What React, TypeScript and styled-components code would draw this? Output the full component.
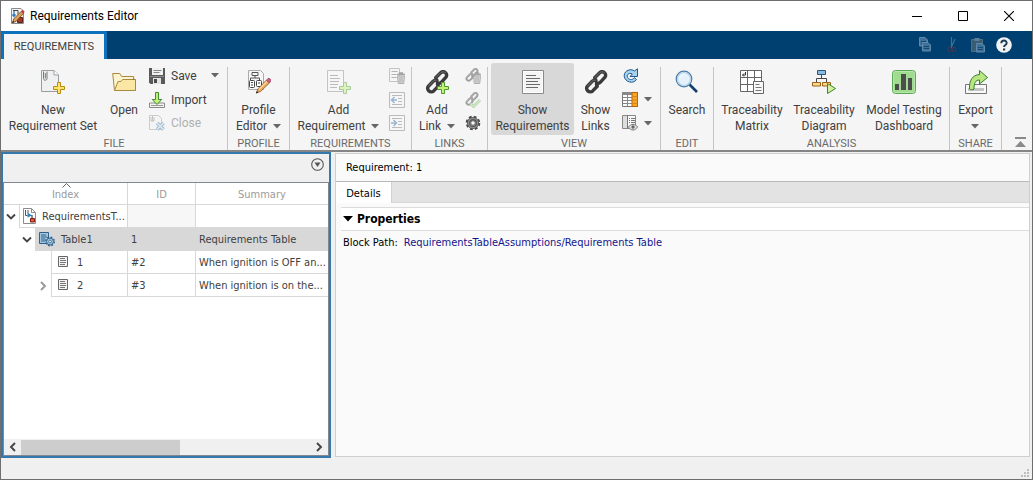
import React from "react";
import styled, { createGlobalStyle, css } from "styled-components";

const UI = `Roboto, "Liberation Sans", sans-serif`;
const TREE = `"DejaVu Sans Condensed", "DejaVu Sans", sans-serif`;

const Global = createGlobalStyle`
  *, *::before, *::after { box-sizing: border-box; }
  body { margin: 0; font-family: ${UI}; font-size: 12px; color: #404040; }
  button { font: inherit; color: inherit; border: 0; padding: 0; background: none; }
  svg { display: block; flex: none; }
`;

/* ---------- window frame ---------- */

const Frame = styled.div`
  display: flex;
  flex-direction: column;
  min-height: 100vh;
  border: 1px solid #6e6e6e;
  background: #f0f0f0;
`;

const TitleBar = styled.header`
  display: flex;
  align-items: center;
  height: 30px;
  padding-left: 8px;
  background: #fff;
`;

const Title = styled.h1`
  flex: 1;
  margin: 0 0 0 5px;
  font-size: 12px;
  font-weight: 400;
  color: #000;
`;

const WindowButton = styled.button`
  display: flex;
  align-items: center;
  justify-content: center;
  width: 46px;
  height: 28px;
`;

const TabStrip = styled.nav`
  display: flex;
  justify-content: space-between;
  align-items: center;
  height: 28px;
  background: #004070;
`;

const RibbonTab = styled.button`
  align-self: stretch;
  width: 106px;
  border: 3px solid #0d72bd;
  border-bottom: 0;
  border-radius: 2px 2px 0 0;
  background: #f5f5f5;
  font-size: 11px;
`;

const QuickAccess = styled.div`
  display: flex;
  gap: 10px;
  padding-right: 20px;
`;

const QuickButton = styled.button<{ $dim?: boolean }>`
  width: 16px;
  height: 16px;
  opacity: ${(p) => (p.$dim ? 0.45 : 1)};
`;

/* ---------- toolstrip ---------- */

const Toolstrip = styled.div`
  display: flex;
  height: 93px;
  border-bottom: 2px solid #858585;
  background: #f5f5f5;
`;

const SectionBox = styled.section`
  display: flex;
  flex-direction: column;
  padding: 4px 1px 0 0;
  background: linear-gradient(#c4c4c4, #c4c4c4) right 0 top 8px / 1px 100% no-repeat;
`;

const SectionTools = styled.div<{ $inset?: number }>`
  display: flex;
  height: 72px;
  padding-left: ${(p) => p.$inset ?? 0}px;
`;

const SectionLabel = styled.h2`
  margin: 0;
  padding-top: 1px;
  font-size: 11px;
  line-height: 15px;
  font-weight: 400;
  text-align: center;
  color: #6a6a6a;
`;

const BigButton = styled.button<{ $w: number; $on?: boolean }>`
  display: flex;
  flex-direction: column;
  align-items: center;
  width: ${(p) => p.$w}px;
  height: 72px;
  padding-top: 7px;
  line-height: 16px;
  white-space: nowrap;
  border-radius: 3px;
  ${(p) => p.$on && css`background: #d8d8d8;`}
`;

const BigLabel = styled.span`
  display: flex;
  flex-direction: column;
  align-items: center;
  margin-top: 8px;
`;

const LabelLine = styled.span`
  display: flex;
  align-items: center;
  gap: 6px;
  min-height: 16px;
`;

const SmallColumn = styled.div<{ $l: number; $r: number }>`
  display: flex;
  flex-direction: column;
  padding: 1px ${(p) => p.$r}px 0 ${(p) => p.$l}px;
`;

const SmallButton = styled.button<{ $off?: boolean; $fill?: boolean }>`
  display: flex;
  align-items: center;
  gap: 6px;
  height: 24px;
  color: ${(p) => (p.$off ? "#b0b0b0" : "inherit")};
  ${(p) => p.$fill && css`width: 70px;`}
  & > svg:first-child { opacity: ${(p) => (p.$off ? 0.45 : 1)}; }
  & > svg:last-child:not(:first-child) { margin-left: auto; }
`;

const CollapseButton = styled.button`
  align-self: flex-end;
  margin: 0 6px 3px auto;
`;

/* ---------- body ---------- */

const Body = styled.main`
  display: flex;
  flex: 1;
  gap: 4px;
`;

const TreePanel = styled.section`
  display: flex;
  flex-direction: column;
  width: 32%;
  border: 2px solid #3478ac;
`;

const TreeToolbar = styled.div`
  display: flex;
  justify-content: flex-end;
  align-items: flex-start;
  height: 28px;
  padding: 4px 5px 0 0;
`;

const TreeBox = styled.div`
  display: flex;
  flex-direction: column;
  flex: 1;
  border: 1px solid #828790;
  background: #fff;
`;

const TreeTable = styled.table`
  width: 100%;
  table-layout: fixed;
  border-collapse: separate;
  border-spacing: 0;
  font-family: ${TREE};
  font-size: 11px;
`;

const HeadCell = styled.th<{ $w?: number; $last?: boolean }>`
  height: 22px;
  padding: 2px 0 0;
  ${(p) => p.$w && css`width: ${p.$w}px;`}
  font-weight: 400;
  color: #9b9b9b;
  border-bottom: 1px solid #d8d8d8;
  border-right: ${(p) => (p.$last ? 0 : 1)}px solid #d8d8d8;
`;

const HeadSort = styled.div`
  position: relative;
  & > svg { position: absolute; top: -5px; left: 58px; }
`;

const Cell = styled.td<{ $sel?: boolean; $last?: boolean; $shade?: boolean }>`
  height: 23px;
  padding: 0 0 0 3px;
  white-space: nowrap;
  overflow: hidden;
  border-bottom: 1px solid #d8d8d8;
  border-right: ${(p) => (p.$last ? 0 : 1)}px solid #d8d8d8;
  background: ${(p) => (p.$sel ? "#d8d8d8" : p.$shade ? "#f7f7f7" : "#fff")};
`;

const TreeCell = styled.td`
  height: 23px;
  padding: 0;
  overflow: hidden;
`;

const TreeRow = styled.div`
  display: flex;
  height: 23px;
`;

const Toggle = styled.button<{ $indent: number }>`
  display: flex;
  align-items: center;
  justify-content: flex-end;
  width: ${(p) => p.$indent}px;
  padding-right: 3px;
  flex: none;
`;

const TreeLabel = styled.div<{ $sel?: boolean }>`
  display: flex;
  flex: 1;
  align-items: center;
  gap: 6px;
  min-width: 0;
  padding-left: 3px;
  white-space: nowrap;
  overflow: hidden;
  border: 1px solid #d8d8d8;
  border-top: 0;
  background: ${(p) => (p.$sel ? "#d8d8d8" : "#fff")};
`;

const ScrollBar = styled.div`
  display: flex;
  align-items: center;
  height: 16px;
  margin-top: auto;
  background: #f0f0f0;
`;

const ScrollArrow = styled.button`
  display: flex;
  align-items: center;
  justify-content: center;
  width: 17px;
  height: 16px;
`;

const ScrollTrack = styled.div`
  flex: 1;
  height: 15px;
`;

const ScrollThumb = styled.div`
  width: 55%;
  height: 15px;
  background: #cdcdcd;
`;

const DetailPanel = styled.section`
  display: flex;
  flex-direction: column;
  flex: 1;
  min-width: 0;
  margin: 1px 2px 1px 0;
  border: 1px solid #cfcfcf;
  background: #fafafa;
  font-family: ${TREE};
  font-size: 11px;
  color: #000;
`;

const DetailTitle = styled.h2`
  margin: 0;
  padding-left: 10px;
  font-size: 11px;
  font-weight: 400;
  line-height: 27px;
  border-bottom: 1px solid #b8b8b8;
`;

const DetailTabs = styled.div`
  display: flex;
  height: 21px;
  background: #e3e3e3;
  border-bottom: 1px solid #d8d8d8;
`;

const DetailTab = styled.button`
  width: 56px;
  height: 21px;
  padding-top: 1px;
  background: #fff;
  border-right: 1px solid #d0d0d0;
`;

const DetailBody = styled.div`
  padding: 4px 0 0 5px;
`;

const GroupHead = styled.button`
  display: flex;
  align-items: center;
  gap: 4px;
  width: 100%;
  height: 24px;
  padding-left: 2px;
  border: solid #dcdcdc;
  border-width: 1px 0;
  background: #fff;
  font-size: 12px;
  font-weight: 700;
`;

const Property = styled.dl`
  display: flex;
  gap: 6px;
  margin: 0;
  padding: 4px 0 0 2px;
  line-height: 16px;
  & > dd { margin: 0; }
`;

const PathLink = styled.a`
  color: #14148c;
  text-decoration: none;
`;

const StatusBar = styled.footer`
  display: flex;
  justify-content: flex-end;
  align-items: flex-end;
  height: 21px;
  padding: 0 3px 2px 0;
`;

/* ---------- icons ---------- */

type SvgProps = { s?: number; w?: number; h?: number; children: React.ReactNode };
const Svg = ({ s = 16, w, h, children }: SvgProps) => (
  <svg width={w ?? s} height={h ?? s} viewBox={`0 0 ${w ?? s} ${h ?? s}`} fill="none" aria-hidden="true">
    {children}
  </svg>
);

const Caret = () => (
  <Svg w={8} h={5}><path d="M0 0h8L4 4.5z" fill="#666" /></Svg>
);

const Plus = ({ x, y, green }: { x: number; y: number; green?: boolean }) => (
  <path
    transform={`translate(${x} ${y})`}
    d="M4.5.5h3v4h4v3h-4v4h-3v-4h-4v-3h4z"
    fill={green ? "#c4f07c" : "#ffe46a"}
    stroke={green ? "#4a9a2e" : "#b98a10"}
  />
);

const Pencil = () => (
  <g>
    <path d="M9.500 23l1.300-4L19.500 10l3 3-9 8.500z" fill="#eba75a" stroke="#7a5228" strokeWidth=".7" />
    <path d="M12 19.500l8-8" stroke="#ffd89a" strokeWidth="1.200" />
    <path d="M19.500 10l1.500-1.500c1.500-.7 3.200 1 2.700 2.500L22.500 13z" fill="#d65a86" stroke="#8d2d52" strokeWidth=".6" />
    <path d="M9 23.500l.7-2.500 1.700 1.600z" fill="#222" />
  </g>
);

const AppIcon = () => (
  <Svg>
    <path d="M2.500.500h9.500l2.500 2.500v12.500h-12z" fill="#f4f4f4" stroke="#8a8a8a" />
    <path d="M5 2v6M3.500 6.500L5 8.500l1.500-2" stroke="#2b78b8" strokeWidth="1.300" />
    <path d="M4 2.500h5v4" stroke="#444" />
    <path d="M8.500 9.500h5v5h-5z" fill="#a03a28" stroke="#5c2116" />
    <path d="M3.500 14.500l1.200-3.500L12 3.500l2.500 2-7.500 8z" fill="#dda05a" stroke="#6b3a1c" strokeWidth=".8" />
    <path d="M12 3.500l1.400-1.700 2.300 1.900-1.200 1.800z" fill="#c33b4f" />
    <path d="M3.300 14.900l.7-2 1.200 1.300z" fill="#111" />
  </Svg>
);

const NewSetIcon = () => (
  <Svg s={24}>
    <path d="M.5.500h12.500l4.500 4.500v16.500h-17z" fill="#eef0f1" stroke="#9c9c9c" />
    <path d="M13 .500v4.500h4.500" fill="#fff" stroke="#9c9c9c" />
    <path d="M2.500 1.500v7c0 2.300 3.500 2.300 3.500 0v-7M4.300 3v5.500" stroke="#777" />
    <Plus x={12} y={12} />
  </Svg>
);

const FolderIcon = () => (
  <Svg s={24}>
    <path d="M2.500 20.500L.7 3.500h7l2 3h12v3h2v11z" fill="#fdf3cc" stroke="#a88a3e" />
    <path d="M2.500 20.500L6 11.500h3l1.500-2h13v11z" fill="#fae7a4" stroke="#a88a3e" />
    <path d="M21.500 8.500v1" stroke="#7d6427" />
  </Svg>
);

const SaveIcon = () => (
  <Svg>
    <path d="M0 0h16v16H1.500L0 14.500z" fill="#5a5a5a" />
    <path d="M3 0h11v7H3z" fill="#f0f0f0" />
    <path d="M4.500 2.500h8M4.500 4.500h6" stroke="#888" />
    <path d="M1 8.500h14" stroke="#8c8c8c" />
    <path d="M4 10h8v6H4z" fill="#e4e4e4" />
    <path d="M5 11h3v4H5z" fill="#4a4a4a" />
  </Svg>
);

const ImportIcon = () => (
  <Svg>
    <path d="M.5 15.500v-4.500h15v4.500z" fill="#f2f2f2" stroke="#8a8a8a" />
    <path d="M2 13.500h12" stroke="#999" />
    <path d="M6.500.500h3v7h3.200L8 12.500 3.300 7.500h3.200z" fill="#c6ec7f" stroke="#3f8d28" />
  </Svg>
);

const CloseSetIcon = () => (
  <Svg>
    <path d="M.5.500h9l3 3v11H.5z" fill="#f4f4f4" stroke="#999" />
    <path d="M3.500 1v5M2 2v4h3V2" stroke="#888" />
    <path d="M8 8l6.500 6.500M14.500 8L8 14.500" stroke="#3d74a8" strokeWidth="3.500" />
    <path d="M8 8l6.500 6.500M14.500 8L8 14.500" stroke="#c9def0" strokeWidth="1.500" />
  </Svg>
);

const ProfileIcon = () => (
  <Svg s={24}>
    <path d="M1.500.500h12l3 3v16h-15z" fill="#f6f6f6" stroke="#aaa" />
    <path d="M5 2.500h6v3H5zM8 5.500v2.500M3.500 8h9M3.500 8v2.500M12.500 8v2.500" stroke="#555" />
    <rect x="2.500" y="10.500" width="5" height="7" rx="1" fill="#fff" stroke="#444" />
    <rect x="9.500" y="10.500" width="5" height="6" rx="1" fill="#fff" stroke="#444" />
    <path d="M4 12.500h2M4 15h2M11 13h2" stroke="#444" />
    <Pencil />
  </Svg>
);

const AddReqIcon = () => (
  <Svg s={24}>
    <g opacity=".45">
      <path d="M.5.500h16v21H.5z" fill="#f8f8f8" stroke="#888" />
      <path d="M3 5.500h8M3 8.500h10M3 11.500h9M3 14.500h8M3 17.500h7" stroke="#777" />
      <Plus x={12} y={12} green />
    </g>
  </Svg>
);

const Chain = ({ k = 1 }: { k?: number }) => (
  <g transform={`scale(${k})`} strokeLinecap="round" strokeLinejoin="round">
    <g stroke="#3a3a3a" strokeWidth="3.400">
      <path d="M11.500 9.500l-.8-1.800 5-5c1.400-1.300 3.500-1.100 4.800 0 1.300 1.200 1.600 3.200.3 4.600l-4.600 5c-1.100 1.100-2.500 1.200-3.700.8" />
      <path d="M12.500 14.500l.8 1.800-4.600 4.600c-1.400 1.300-3.600 1.100-4.900 0-1.300-1.200-1.700-3.200-.4-4.700l4.800-5c1.100-1.100 2.600-1.200 3.800-.7" />
    </g>
    <g stroke="#777" strokeWidth=".9">
      <path d="M11 7.500l4.700-4.800c1.400-1.300 3.500-1.100 4.800 0" />
      <path d="M3.600 16l4.600-4.800c1-1 2-1.200 3-1" />
    </g>
  </g>
);

const AddLinkIcon = () => (
  <Svg s={24}><Chain /><Plus x={12} y={12} green /></Svg>
);
const LinksIcon = () => (<Svg s={24}><Chain /></Svg>);

const Trash = () => (
  <g>
    <path d="M8 6.500h8M10.500 6V5h3v1" stroke="#444" strokeWidth="1.400" />
    <path d="M8.500 8h7l-.8 7.500H9.300z" fill="#bbb" stroke="#555" />
    <path d="M11 9v5.500M13 9v5.500" stroke="#555" />
  </g>
);

const DeleteReqIcon = () => (
  <Svg>
    <path d="M.5.500h10v13H.5z" fill="#f6f6f6" stroke="#888" />
    <path d="M2.500 3.500h6M2.500 6.500h5M2.500 9.500h5" stroke="#666" />
    <Trash />
  </Svg>
);
const DeleteLinkIcon = () => (<Svg><Chain k={0.58} /><Trash /></Svg>);
const CheckLinkIcon = () => (
  <Svg>
    <Chain k={0.58} />
    <path d="M5.500 11.500l3 3L15 8" stroke="#4b9a3a" strokeWidth="2.600" />
    <path d="M5.500 11.500l3 3L15 8" stroke="#b9e99a" strokeWidth="1.200" />
  </Svg>
);
const IndentIcon = ({ left }: { left?: boolean }) => (
  <Svg>
    <path d="M.5.500h15v15H.5z" fill="#f8f8f8" stroke="#777" />
    <path d="M3 3.500h10M9 6.500h4M9 9.500h4M3 12.500h10" stroke="#777" />
    {left ? (
      <path d="M8 8H3M5.500 5L2.500 8l3 3" stroke="#2268a8" strokeWidth="1.400" />
    ) : (
      <path d="M2 8h5M4.500 5l3 3-3 3" stroke="#2268a8" strokeWidth="1.400" />
    )}
  </Svg>
);

const GearIcon = () => (
  <Svg>
    <circle cx="8" cy="8" r="6" stroke="#4a4a4a" strokeWidth="2.600" strokeDasharray="2.700 2.010" />
    <circle cx="8" cy="8" r="4.300" stroke="#555" strokeWidth="3.400" />
    <circle cx="8" cy="8" r="4.600" stroke="#909090" strokeWidth="1.200" />
    <circle cx="8" cy="8" r="2.300" fill="#f5f5f5" stroke="#444" strokeWidth=".8" />
  </Svg>
);

const DocIcon = () => (
  <Svg w={22} h={24}>
    <path d="M.5.500h21v23H.5z" fill="#f4f4f4" stroke="#8a8a8a" />
    <path d="M1.500 1.500h19v21h-19z" stroke="#fff" />
    <path d="M4 5.500h10M4 8.500h14M4 11.500h12M4 14.500h14M4 17.500h12" stroke="#6a6a6a" />
  </Svg>
);

const RefreshIcon = () => (
  <Svg>
    <path d="M14.500 11.500c-1.500 2.300-4.200 3.200-6.800 2.500C1.500 12.500.5 5.500 5 2.800 7.800 1.200 10.500 1.500 12.500 3L15.500.8v7.700H8l2.300-2.500C6.500 4 3.800 7.500 6 10.300c1.800 2 5 1.500 6.300-.6z" fill="#a9d2ee" stroke="#1d5a92" />
  </Svg>
);

const ColumnsIcon = () => (
  <Svg>
    <path d="M.5.500h15v14H.5z" fill="#fff" stroke="#777" />
    <path d="M0 0h10v3H0z" fill="#888" />
    <path d="M1 5.500h9M1 8.500h9M1 11.500h9M5.500 1v13" stroke="#888" />
    <path d="M10 .500h5.500v14H10z" fill="#f7a823" stroke="#b8600f" />
    <path d="M10.500 4.500h5M10.500 8h5M10.500 11.500h5" stroke="#d98320" />
  </Svg>
);

const DisplayIcon = () => (
  <Svg>
    <path d="M.5.500h13v13H.5z" fill="#f8f8f8" stroke="#888" />
    <path d="M1 1h4v12H1z" fill="#ddd" />
    <path d="M5.500 0v13M7 3.500h1M9 3.500h4M7 5.500h1M9 5.500h4M7 7.500h1M9 7.500h4" stroke="#777" />
    <path d="M6.500 12c2-3.500 7-3.500 9 0-2 4-7 4-9 0z" fill="#e4e4e4" stroke="#777" />
    <circle cx="11" cy="12" r="1.700" fill="#666" />
  </Svg>
);

const SearchIcon = () => (
  <Svg s={24}>
    <path d="M14.500 14.500l7.500 7.500" stroke="#123f70" strokeWidth="2.600" />
    <circle cx="9" cy="9" r="7.800" fill="#e6f2fb" stroke="#4d7ea8" strokeWidth="1.200" />
    <circle cx="9" cy="9" r="6.500" stroke="#b4d1e8" strokeWidth="1.200" />
    <path d="M4.500 8.500c.5-3 3-4.500 6-4-2 0-4.500 1.500-6 4z" fill="#fff" />
  </Svg>
);

const MatrixIcon = () => (
  <Svg s={24}>
    <path d="M.5.500h21v21H.5z" fill="#fff" stroke="#666" />
    <path d="M.5 7.500h21M.5 14.500h21M7.500.500v21M14.500.500v21" stroke="#666" />
    <path d="M5.500 2v3H2.500M4 3.500L2.500 5 4 6.500" stroke="#333" />
    <path d="M13.500 11.500h10v12h-10z" fill="#f8f8f8" stroke="#666" />
    <path d="M15.500 14.500h4M15.500 17.500h6M15.500 20.500h6" stroke="#777" />
  </Svg>
);

const DiagramIcon = () => (
  <Svg s={24}>
    <path d="M9.500 5v3.500M4.500 12V8.500h10V12" stroke="#444" />
    <path d="M5.500.500h8v4h-8z" fill="#8db9dc" stroke="#28577f" />
    <path d="M.5 12.500h8v3.500h-8zM10.500 12.500h8v3.500h-8z" fill="#ffd789" stroke="#9a6519" />
    <path d="M15.500 13.500v10l8-5z" fill="#d4f0a0" stroke="#34872a" />
  </Svg>
);

const DashboardIcon = () => (
  <Svg s={24}>
    <rect x=".5" y=".5" width="23" height="23" rx="3" fill="#9fdc90" stroke="#5ba657" />
    <rect x="1.500" y="1.500" width="21" height="21" rx="2" stroke="#b7e6ab" />
    <path d="M3 14h4v6H3zM9 4h5v16H9zM16 8h4v12h-4z" fill="#4d4d4d" />
  </Svg>
);

const ExportIcon = () => (
  <Svg s={24}>
    <path d="M1.500 14.500h21v9h-21z" fill="#f8f8f8" stroke="#777" />
    <path d="M4 18h16v3H4z" fill="#c4c4c4" />
    <path d="M5.500 19C5 10.500 8.500 5 15.500 4.500v-4l8 7-8 6.500v-4c-4 0-5.500 3-5.500 9-1 1-3.500 1-4.500 0z" fill="#b9e680" stroke="#37812c" />
  </Svg>
);

const Sheet = ({ x, y }: { x: number; y: number }) => (
  <g transform={`translate(${x} ${y})`}>
    <path d="M.5.500h5.500l2.500 2.500v6H.5z" fill="#8fb0cc" stroke="#d4e2ee" />
    <path d="M2 4.500h5M2 6.500h5" stroke="#23567f" />
  </g>
);

const CopyIcon = () => (<Svg><Sheet x={1} y={0} /><Sheet x={4} y={5} /></Svg>);
const CutIcon = () => (
  <Svg>
    <path d="M7.500 0v10M11 2L7 11" stroke="#8fa9c0" strokeWidth="1.200" />
    <ellipse cx="5.500" cy="12.500" rx="1.800" ry="2.300" stroke="#b0282e" />
    <ellipse cx="10" cy="12.500" rx="1.800" ry="2.300" stroke="#b0282e" />
  </Svg>
);
const PasteIcon = () => (
  <Svg>
    <path d="M1.500 2.500h11v12h-11z" fill="#80827a" stroke="#b0a890" />
    <path d="M4.500 1h5v3h-5z" fill="#ccc" />
    <Sheet x={6} y={6} />
  </Svg>
);
const HelpIcon = () => (
  <Svg>
    <circle cx="8" cy="8" r="7.800" fill="#f4f4f4" />
    <path d="M5.300 6.200c0-3.600 5.500-3.400 5.400-.2C10.700 8 8 7.900 8 10" stroke="#1c3a55" strokeWidth="1.900" />
    <path d="M7 11.500h2.200v2H7z" fill="#1c3a55" />
  </Svg>
);

const ModelIcon = () => (
  <Svg w={13} h={16}>
    <path d="M.5.500h8l4 4v11H.5z" fill="#fdfdfd" stroke="#8c8c8c" />
    <path d="M8.500.500v4h4" stroke="#8c8c8c" />
    <path d="M2.500 2v5.500h2M5 2v3" stroke="#555" />
    <path d="M4.500 4.500l4.500 3-4.500 2z" fill="#2b82c4" />
    <path d="M9 7v4" stroke="#222" />
    <path d="M7.500 10.500h4v3.500h-4z" fill="#e0583a" stroke="#7c2011" />
  </Svg>
);
const TableGearIcon = () => (
  <Svg>
    <path d="M.5 1.500h9v11h-9z" fill="#a4c5dd" stroke="#2d628c" />
    <path d="M2 4h5M2 6h6M2 8h4M2 10h4" stroke="#2d628c" />
    <circle cx="11" cy="10.500" r="4.300" stroke="#2d5f87" strokeWidth="1.400" strokeDasharray="1.800 1.580" />
    <circle cx="11" cy="10.500" r="3.500" fill="#9cc3de" stroke="#2d5f87" strokeWidth=".9" />
    <circle cx="11" cy="10.500" r="1.400" fill="#e8eef3" stroke="#2d5f87" strokeWidth=".8" />
  </Svg>
);
const ReqRowIcon = () => (
  <Svg>
    <path d="M3.500 2.500h9v10h-9z" fill="#f2f2f2" stroke="#666" />
    <path d="M5 4.500h5M5 6.500h6M5 8.500h6M5 10.500h5" stroke="#777" />
  </Svg>
);

const Chevron = ({ dir, color = "#444" }: { dir: "down" | "right" | "left"; color?: string }) => (
  <Svg s={10}>
    <path
      d={dir === "down" ? "M1 2.500l4 4 4-4" : dir === "right" ? "M3 1l4 4-4 4" : "M7 1L3 5l4 4"}
      stroke={color}
      strokeWidth="1.900"
    />
  </Svg>
);

/* ---------- composition ---------- */

type BigProps = { icon: React.ReactNode; lines: string[]; w: number; caret?: "inline" | "below"; on?: boolean; off?: boolean };
const Big = ({ icon, lines, w, caret, on, off }: BigProps) => (
  <BigButton type="button" $w={w} $on={on} aria-pressed={on} aria-disabled={off}>
    {icon}
    <BigLabel>
      {lines.map((t, i) => (
        <LabelLine key={t}>
          {t}
          {caret === "inline" && i === lines.length - 1 && <Caret />}
        </LabelLine>
      ))}
      {caret === "below" && <LabelLine><Caret /></LabelLine>}
    </BigLabel>
  </BigButton>
);

const Section = ({ label, inset, children }: { label: string; inset?: number; children: React.ReactNode }) => (
  <SectionBox>
    <SectionTools $inset={inset}>{children}</SectionTools>
    <SectionLabel>{label}</SectionLabel>
  </SectionBox>
);

export default function App() {
  return (
    <Frame>
      <Global />
      <TitleBar>
        <AppIcon />
        <Title>Requirements Editor</Title>
        <WindowButton type="button" aria-label="Minimize">
          <Svg s={10}><path d="M0 5.500h10" stroke="#000" /></Svg>
        </WindowButton>
        <WindowButton type="button" aria-label="Maximize">
          <Svg s={10}><path d="M.5.500h9v9h-9z" stroke="#000" /></Svg>
        </WindowButton>
        <WindowButton type="button" aria-label="Close window">
          <Svg s={10}><path d="M0 0l10 10M10 0L0 10" stroke="#000" strokeWidth="1.100" /></Svg>
        </WindowButton>
      </TitleBar>

      <TabStrip>
        <RibbonTab type="button">REQUIREMENTS</RibbonTab>
        <QuickAccess>
          <QuickButton type="button" aria-label="Copy" $dim><CopyIcon /></QuickButton>
          <QuickButton type="button" aria-label="Cut" $dim><CutIcon /></QuickButton>
          <QuickButton type="button" aria-label="Paste" $dim><PasteIcon /></QuickButton>
          <QuickButton type="button" aria-label="Help"><HelpIcon /></QuickButton>
        </QuickAccess>
      </TabStrip>

      <Toolstrip>
        <Section label="FILE">
          <Big icon={<NewSetIcon />} lines={["New", "Requirement Set"]} w={104} />
          <Big icon={<FolderIcon />} lines={["Open"]} w={38} />
          <SmallColumn $l={6} $r={8}>
            <SmallButton type="button" $fill><SaveIcon />Save<Caret /></SmallButton>
            <SmallButton type="button"><ImportIcon />Import</SmallButton>
            <SmallButton type="button" $off><CloseSetIcon />Close</SmallButton>
          </SmallColumn>
        </Section>
        <Section label="PROFILE">
          <Big icon={<ProfileIcon />} lines={["Profile", "Editor"]} w={61} caret="inline" />
        </Section>
        <Section label="REQUIREMENTS">
          <Big icon={<AddReqIcon />} lines={["Add", "Requirement"]} w={97} caret="inline" off />
          <SmallColumn $l={2} $r={6}>
            <SmallButton type="button" $off aria-label="Delete requirement"><DeleteReqIcon /></SmallButton>
            <SmallButton type="button" $off aria-label="Promote"><IndentIcon left /></SmallButton>
            <SmallButton type="button" $off aria-label="Demote"><IndentIcon /></SmallButton>
          </SmallColumn>
        </Section>
        <Section label="LINKS">
          <Big icon={<AddLinkIcon />} lines={["Add", "Link"]} w={50} caret="inline" />
          <SmallColumn $l={3} $r={6}>
            <SmallButton type="button" $off aria-label="Delete link"><DeleteLinkIcon /></SmallButton>
            <SmallButton type="button" $off aria-label="Check links"><CheckLinkIcon /></SmallButton>
            <SmallButton type="button" aria-label="Link settings"><GearIcon /></SmallButton>
          </SmallColumn>
        </Section>
        <Section label="VIEW" inset={3}>
          <Big icon={<DocIcon />} lines={["Show", "Requirements"]} w={83} on />
          <Big icon={<LinksIcon />} lines={["Show", "Links"]} w={43} />
          <SmallColumn $l={5} $r={8}>
            <SmallButton type="button" aria-label="Refresh"><RefreshIcon /></SmallButton>
            <SmallButton type="button" aria-label="Columns"><ColumnsIcon /><Caret /></SmallButton>
            <SmallButton type="button" aria-label="Display"><DisplayIcon /><Caret /></SmallButton>
          </SmallColumn>
        </Section>
        <Section label="EDIT">
          <Big icon={<SearchIcon />} lines={["Search"]} w={52} />
        </Section>
        <Section label="ANALYSIS" inset={1}>
          <Big icon={<MatrixIcon />} lines={["Traceability", "Matrix"]} w={74} />
          <Big icon={<DiagramIcon />} lines={["Traceability", "Diagram"]} w={70} />
          <Big icon={<DashboardIcon />} lines={["Model Testing", "Dashboard"]} w={90} />
        </Section>
        <Section label="SHARE">
          <Big icon={<ExportIcon />} lines={["Export"]} w={51} caret="below" />
        </Section>
        <CollapseButton type="button" aria-label="Collapse toolstrip">
          <Svg w={11} h={10}>
            <path d="M0 0h11v2H0zM5.500 4L11 10H0z" fill="#8a8a8a" />
          </Svg>
        </CollapseButton>
      </Toolstrip>

      <Body>
        <TreePanel>
          <TreeToolbar>
            <button type="button" aria-label="Panel actions">
              <Svg s={13}>
                <circle cx="6.500" cy="6.500" r="5.800" stroke="#555" strokeWidth="1.100" />
                <path d="M3.500 4.500h6l-3 4.500z" fill="#555" />
              </Svg>
            </button>
          </TreeToolbar>
          <TreeBox>
            <TreeTable>
              <thead>
                <tr>
                  <HeadCell $w={124} aria-sort="ascending">
                    <HeadSort>
                      Index
                      <Svg w={9} h={5}><path d="M.5 4.500l4-4 4 4" stroke="#666" /></Svg>
                    </HeadSort>
                  </HeadCell>
                  <HeadCell $w={68}>ID</HeadCell>
                  <HeadCell $last>Summary</HeadCell>
                </tr>
              </thead>
              <tbody>
                <tr>
                  <TreeCell>
                    <TreeRow>
                      <Toggle type="button" aria-label="Collapse" $indent={15}><Chevron dir="down" /></Toggle>
                      <TreeLabel><ModelIcon />RequirementsT...</TreeLabel>
                    </TreeRow>
                  </TreeCell>
                  <Cell $shade />
                  <Cell $last />
                </tr>
                <tr>
                  <TreeCell>
                    <TreeRow>
                      <Toggle type="button" aria-label="Collapse" $indent={31}><Chevron dir="down" /></Toggle>
                      <TreeLabel $sel><TableGearIcon />Table1</TreeLabel>
                    </TreeRow>
                  </TreeCell>
                  <Cell $sel>1</Cell>
                  <Cell $sel $last>Requirements Table</Cell>
                </tr>
                <tr>
                  <TreeCell>
                    <TreeRow>
                      <Toggle as="span" $indent={47} />
                      <TreeLabel><ReqRowIcon />1</TreeLabel>
                    </TreeRow>
                  </TreeCell>
                  <Cell>#2</Cell>
                  <Cell $last>When ignition is OFF an...</Cell>
                </tr>
                <tr>
                  <TreeCell>
                    <TreeRow>
                      <Toggle type="button" aria-label="Expand" $indent={47}><Chevron dir="right" color="#999" /></Toggle>
                      <TreeLabel><ReqRowIcon />2</TreeLabel>
                    </TreeRow>
                  </TreeCell>
                  <Cell>#3</Cell>
                  <Cell $last>When ignition is on the...</Cell>
                </tr>
              </tbody>
            </TreeTable>
            <ScrollBar>
              <ScrollArrow type="button" aria-label="Scroll left"><Chevron dir="left" /></ScrollArrow>
              <ScrollTrack><ScrollThumb /></ScrollTrack>
              <ScrollArrow type="button" aria-label="Scroll right"><Chevron dir="right" /></ScrollArrow>
            </ScrollBar>
          </TreeBox>
        </TreePanel>

        <DetailPanel>
          <DetailTitle>Requirement: 1</DetailTitle>
          <DetailTabs><DetailTab type="button">Details</DetailTab></DetailTabs>
          <DetailBody>
            <GroupHead type="button" aria-expanded="true">
              <Svg w={10} h={6}><path d="M0 0h10L5 5.500z" fill="#000" /></Svg>
              Properties
            </GroupHead>
            <Property>
              <dt>Block Path:</dt>
              <dd><PathLink href="#block">RequirementsTableAssumptions/Requirements Table</PathLink></dd>
            </Property>
          </DetailBody>
        </DetailPanel>
      </Body>

      <StatusBar>
        <Svg w={8} h={8}>
          <path d="M6 0h2v2H6zM6 3h2v2H6zM6 6h2v2H6zM3 3h2v2H3zM3 6h2v2H3zM0 6h2v2H0z" fill="#bdbdbd" />
        </Svg>
      </StatusBar>
    </Frame>
  );
}
